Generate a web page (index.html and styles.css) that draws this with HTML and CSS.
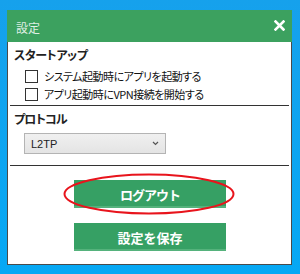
FILE: index.html
```html
<!DOCTYPE html>
<html lang="ja">
<head>
  <meta charset="UTF-8" />
  <meta name="viewport" content="width=device-width, initial-scale=1.0"/>
  <title>設定</title>
  <link rel="stylesheet" href="styles.css">
</head>
<body>
  <div class="dialog">
    <div class="titlebar">
      <span class="title">設定</span>
      <svg class="close" width="11" height="11" viewBox="0 0 11 11">
        <path d="M1.5 1.5 L9.5 9.5 M9.5 1.5 L1.5 9.5" stroke="#fff" stroke-width="2.6" stroke-linecap="square"/>
      </svg>
    </div>

    <div class="panel">
      <div class="section">
        <div class="heading">スタートアップ</div>
        <label class="check"><span class="box"></span>システム起動時にアプリを起動する</label>
        <label class="check"><span class="box"></span>アプリ起動時にVPN接続を開始する</label>
      </div>

      <hr class="divider">

      <div class="section">
        <div class="heading proto">プロトコル</div>
        <div class="select">
          <span>L2TP</span>
          <svg width="7" height="5" viewBox="0 0 7 5">
            <path d="M1 1 L3.5 3.5 L6 1" fill="none" stroke="#555" stroke-width="1.2"/>
          </svg>
        </div>
      </div>

      <hr class="divider">

      <div class="actions">
        <div class="btn-wrap">
          <button class="btn logout">ログアウト</button>
          <svg class="mark" width="172" height="42" viewBox="0 0 172 42">
            <ellipse cx="86" cy="21" rx="84.5" ry="19.5" fill="none" stroke="#e8141c" stroke-width="2"/>
          </svg>
        </div>
        <button class="btn">設定を保存</button>
      </div>
    </div>
  </div>
</body>
</html>
```

FILE: styles.css
```css
body {
  margin: 0;
  padding: 10px 8px 0 7px;
  height: 274px;
  box-sizing: border-box;
  background: linear-gradient(#16a1ec, #06a8f4);
  font-family: "Noto Sans CJK JP", "Noto Sans", sans-serif;
  font-feature-settings: "palt";
}
.dialog {
  width: 285px;
}
.titlebar {
  height: 32px;
  background-color: #3ca15f;
  display: flex;
  align-items: center;
  justify-content: space-between;
  padding: 0 7px 0 9px;
}
.title {
  color: rgba(255, 255, 255, 0.85);
  font-size: 12px;
  margin-top: 2px;
}
.close {
  margin-top: -1px;
}
.panel {
  background-color: #fff;
  border: 1px solid #4a4a4a;
  border-top: none;
  height: 222px;
  display: flex;
  flex-direction: column;
}
.section {
  padding: 4px 6px 0 6px;
}
.heading {
  font-size: 12px;
  line-height: 18px;
  font-weight: bold;
  color: #222;
  letter-spacing: -0.4px;
}
.heading.proto {
  letter-spacing: -0.8px;
}
.check {
  display: flex;
  align-items: center;
  height: 18px;
  padding-left: 11px;
  font-size: 11px;
  color: #111;
  letter-spacing: -0.5px;
}
.check:first-of-type {
  margin-top: 3px;
}
.box {
  width: 11px;
  height: 11px;
  border: 1px solid #333;
  margin-right: 6px;
  flex-shrink: 0;
}
.divider {
  border: none;
  border-top: 1px solid #333;
  margin: 2px 2px 0 2px;
}
.select {
  margin: 5px 0 9px 10px;
  width: 142px;
  height: 21px;
  border: 1px solid #b4b4b4;
  background: linear-gradient(#f0f0f0, #e4e4e4);
  display: flex;
  align-items: center;
  justify-content: space-between;
  padding: 0 6px;
  box-sizing: border-box;
  font-family: "Liberation Sans", Arial, sans-serif;
  font-size: 11px;
  color: #222;
}
.actions {
  display: flex;
  flex-direction: column;
  align-items: center;
  gap: 15px;
  padding-top: 14px;
  margin-left: 1px;
}
.btn-wrap {
  position: relative;
}
.btn {
  display: block;
  width: 152px;
  height: 28px;
  border: none;
  background-color: #36a064;
  box-shadow: inset 0 -2px 0 #55b27c;
  color: #fff;
  font-family: "Noto Sans CJK JP", sans-serif;
  font-size: 13px;
  font-weight: bold;
  padding: 0;
  cursor: pointer;
}
.btn.logout {
  letter-spacing: -1px;
}
.mark {
  position: absolute;
  left: -11px;
  top: -7px;
  pointer-events: none;
}
```
